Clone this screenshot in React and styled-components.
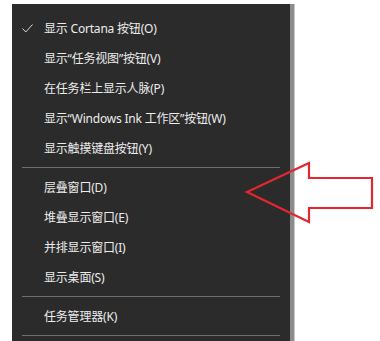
import styled, { createGlobalStyle } from "styled-components";

const GlobalStyle = createGlobalStyle`
    html, body {
        margin: 0;
        padding: 0;
        background: #ffffff;
    }
`;

const Page = styled.div`
    position: relative;
    width: 380px;
    height: 341px;
    overflow: hidden;
    padding: 4px 0 0 12px;
    box-sizing: border-box;
`;

const Menu = styled.ul`
    list-style: none;
    margin: 0;
    padding: 9px 0 0;
    width: 282px;
    height: 360px;
    box-sizing: border-box;
    background-color: #2b2b2b;
    border-right: 4px solid #8c8c8c;
    box-shadow: 1px 0 0 #c8c8c8;
    font-family: "Noto Sans", "Noto Sans CJK SC", sans-serif;
    font-size: 12px;
    color: #ececec;
`;

const Item = styled.li`
    display: flex;
    align-items: center;
    height: 30px;
    padding-left: 32px;
    position: relative;
    white-space: nowrap;
    letter-spacing: -0.2px;
`;

const Check = styled.svg`
    position: absolute;
    left: 10px;
    top: 11px;
`;

const Separator = styled.li`
    height: 9px;
    display: flex;
    align-items: center;
    padding: 0 10px 0 10px;

    &::after {
        content: "";
        flex: 1;
        height: 1px;
        background-color: #6e6e6e;
    }
`;

const Arrow = styled.svg`
    position: absolute;
    left: 0;
    top: 0;
    pointer-events: none;
`;

const groups = [
    [
        { label: "显示 Cortana 按钮(O)", checked: true },
        { label: "显示“任务视图”按钮(V)" },
        { label: "在任务栏上显示人脉(P)" },
        { label: "显示“Windows Ink 工作区”按钮(W)" },
        { label: "显示触摸键盘按钮(Y)" },
    ],
    [
        { label: "层叠窗口(D)" },
        { label: "堆叠显示窗口(E)" },
        { label: "并排显示窗口(I)" },
        { label: "显示桌面(S)" },
    ],
    [
        { label: "任务管理器(K)" },
    ],
];

const App = () => {
    return (
        <>
            <GlobalStyle />
            <Page>
                <Menu>
                    {groups.map((group, gi) => [
                        ...group.map(item => (
                            <Item key={item.label}>
                                {item.checked && (
                                    <Check width="11" height="9" viewBox="0 0 11 9">
                                        <polyline points="0.5,4.5 3.8,8 10.5,0.5" fill="none" stroke="#d8d8d8" strokeWidth="1" />
                                    </Check>
                                )}
                                {item.label}
                            </Item>
                        )),
                        <Separator key={"sep" + gi} />,
                    ])}
                </Menu>
                <Arrow width="380" height="341" viewBox="0 0 380 341">
                    <polygon
                        points="247,192 309,163 309,178 372,178 372,208 309,208 309,222"
                        fill="none"
                        stroke="#e3262f"
                        strokeWidth="2.2"
                        strokeLinejoin="miter"
                    />
                </Arrow>
            </Page>
        </>
    );
};

export default App;
